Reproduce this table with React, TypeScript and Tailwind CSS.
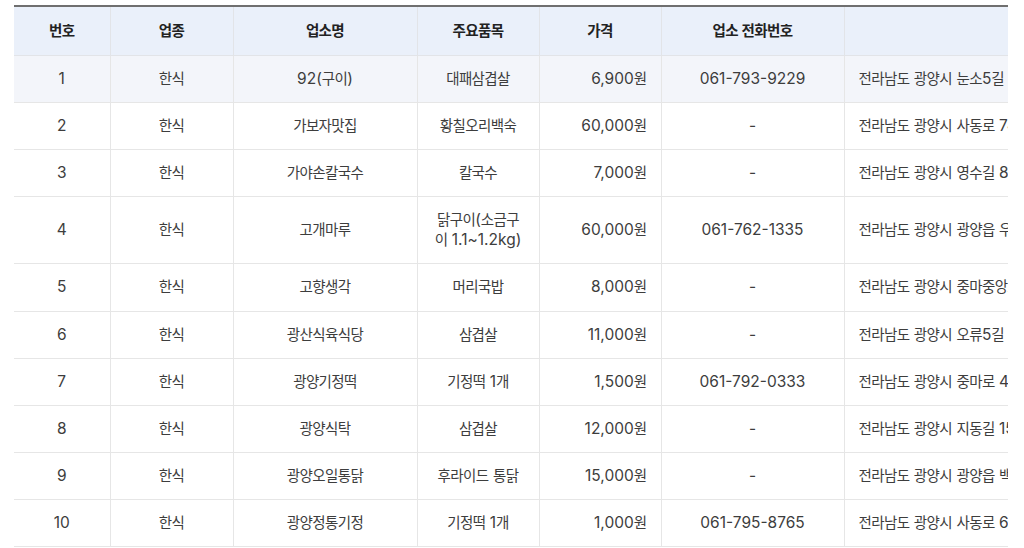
import { Fragment } from 'react';

const rows = [
  { no: 1, type: '한식', name: '92(구이)', item: '대패삼겹살', price: '6,900원', tel: '061-793-9229', addr: '전라남도 광양시 눈소5길 12' },
  { no: 2, type: '한식', name: '가보자맛집', item: '황칠오리백숙', price: '60,000원', tel: '-', addr: '전라남도 광양시 사동로 74' },
  { no: 3, type: '한식', name: '가야손칼국수', item: '칼국수', price: '7,000원', tel: '-', addr: '전라남도 광양시 영수길 83' },
  { no: 4, type: '한식', name: '고개마루', item: '', price: '60,000원', tel: '061-762-1335', addr: '전라남도 광양시 광양읍 우산길 9' },
  { no: 5, type: '한식', name: '고향생각', item: '머리국밥', price: '8,000원', tel: '-', addr: '전라남도 광양시 중마중앙로 21' },
  { no: 6, type: '한식', name: '광산식육식당', item: '삼겹살', price: '11,000원', tel: '-', addr: '전라남도 광양시 오류5길 7' },
  { no: 7, type: '한식', name: '광양기정떡', item: '기정떡 1개', price: '1,500원', tel: '061-792-0333', addr: '전라남도 광양시 중마로 412' },
  { no: 8, type: '한식', name: '광양식탁', item: '삼겹살', price: '12,000원', tel: '-', addr: '전라남도 광양시 지동길 15' },
  { no: 9, type: '한식', name: '광양오일통닭', item: '후라이드 통닭', price: '15,000원', tel: '-', addr: '전라남도 광양시 광양읍 백운로 3' },
  { no: 10, type: '한식', name: '광양정통기정', item: '기정떡 1개', price: '1,000원', tel: '061-795-8765', addr: '전라남도 광양시 사동로 66' },
];

const headers = ['번호', '업종', '업소명', '주요품목', '가격', '업소 전화번호', ''];

// hangul in the fallback CJK font runs wider than the original web font, so set it a bit smaller
function K({ text }: { text: string }) {
  return (
    <>
      {text.split(/([가-힣]+)/).map((part, i) =>
        /[가-힣]/.test(part) ? (
          <span key={i} className="text-[14.5px] tracking-[-0.6px]">
            {part}
          </span>
        ) : (
          <Fragment key={i}>{part}</Fragment>
        )
      )}
    </>
  );
}

const cell = 'border-b border-[#e6e6e6] py-[13px] leading-[20.1px]';

export default function App() {
  return (
    <div
      className="min-h-screen bg-white pl-[14px] pt-[5px]"
      style={{ fontFamily: '"Inter", "Noto Sans CJK KR", sans-serif' }}
    >
      <div className="w-[994px] overflow-hidden">
        <table className="w-[1200px] table-fixed border-collapse border-t-2 border-[#6f6f6f] text-[15.5px]">
          <colgroup>
            <col className="w-[96px]" />
            <col className="w-[123px]" />
            <col className="w-[184px]" />
            <col className="w-[122px]" />
            <col className="w-[122px]" />
            <col className="w-[183px]" />
            <col />
          </colgroup>
          <thead>
            <tr className="bg-[#eaf0fa]">
              {headers.map((h, i) => (
                <th
                  key={i}
                  className={
                    'border-b border-[#e2e4e8] py-[14px] text-center font-bold leading-[20px] text-[#222]' +
                    (i > 0 ? ' border-l' : '')
                  }
                >
                  <K text={h} />
                </th>
              ))}
            </tr>
          </thead>
          <tbody className="text-[#3d3d3d]">
            {rows.map((r) => (
              <tr key={r.no} className={r.no === 1 ? 'bg-[#f3f5fa]' : ''}>
                <td className={cell + ' text-center'}>{r.no}</td>
                <td className={cell + ' border-l text-center'}>
                  <K text={r.type} />
                </td>
                <td className={cell + ' border-l text-center'}>
                  <K text={r.name} />
                </td>
                <td className={cell + ' border-l text-center'}>
                  {r.no === 4 ? (
                    <>
                      <K text="닭구이(소금구" />
                      <br />
                      <K text="이 1.1~1.2kg)" />
                    </>
                  ) : (
                    <K text={r.item} />
                  )}
                </td>
                <td className={cell + ' border-l pr-[14px] text-right'}>
                  <K text={r.price} />
                </td>
                <td className={cell + ' border-l text-center'}>{r.tel}</td>
                <td className={cell + ' whitespace-nowrap border-l pl-[14px] text-left'}>
                  <K text={r.addr} />
                </td>
              </tr>
            ))}
          </tbody>
        </table>
      </div>
    </div>
  );
}
